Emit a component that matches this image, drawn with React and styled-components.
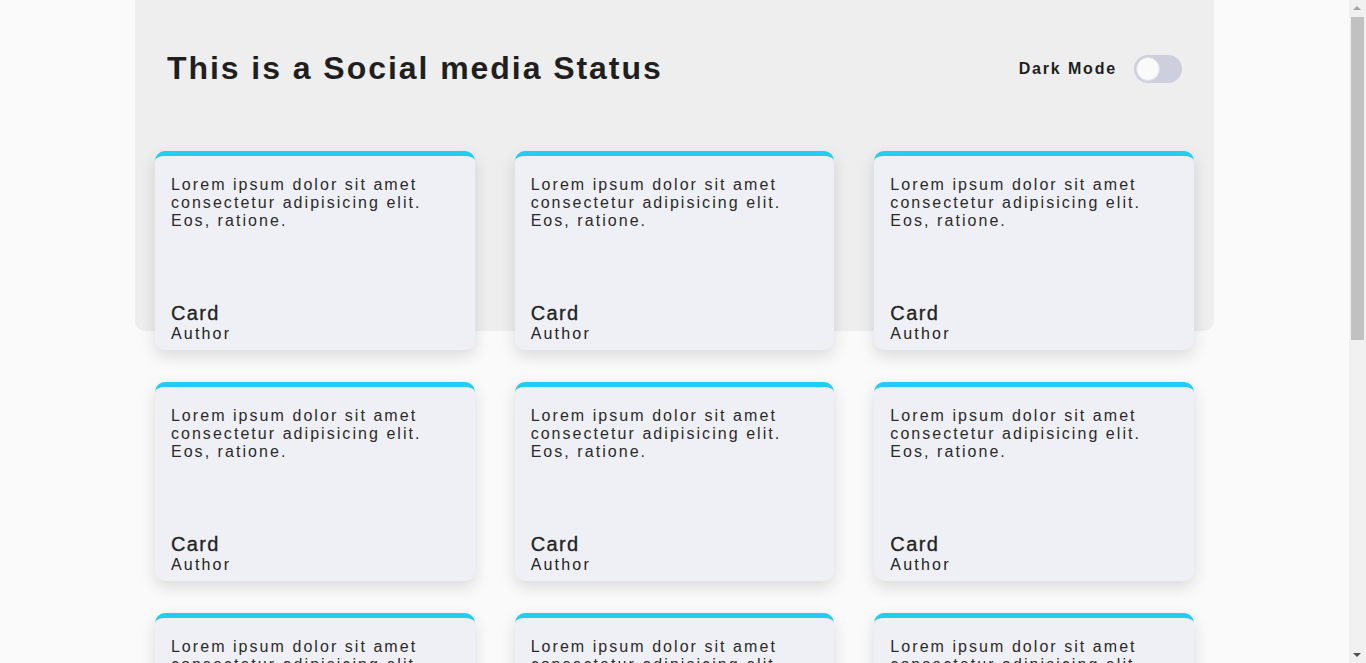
import * as React from 'react';
import styled, { createGlobalStyle } from 'styled-components';

const GlobalStyle = createGlobalStyle`
  html, body {
    margin: 0;
    padding: 0;
    background: #fafafa;
    font-family: 'Liberation Sans', Arial, sans-serif;
    color: #222;
  }
  body {
    padding-right: 17px;
  }
`;

const PageStyle = styled.main`
  position: relative;
  width: 80%;
  margin: 0 auto;
  padding: 0 20px 17px;
  box-sizing: border-box;

  /* grey panel that sits behind the title and the first row of cards */
  &::before {
    content: '';
    position: absolute;
    top: 0;
    left: 0;
    right: 0;
    height: 331px;
    background: #eeeeee;
    border-radius: 0 0 10px 10px;
    z-index: 0;
  }
`;

const HeaderStyle = styled.header`
  position: relative;
  display: flex;
  align-items: center;
  justify-content: space-between;
  height: 137px;
  padding: 0 12px;

  h1 {
    margin: 0;
    font-size: 32px;
    font-weight: 700;
    letter-spacing: 1.95px;
    color: #1f1f1f;
  }
`;

const ToggleRow = styled.label`
  display: flex;
  align-items: center;
  gap: 17px;
  font-size: 16px;
  font-weight: 700;
  letter-spacing: 1.85px;
  color: #1f1f1f;
  cursor: pointer;
`;

const Switch = styled.span`
  width: 48px;
  height: 28px;
  border-radius: 14px;
  background: #cdcfdc;
  display: flex;
  align-items: center;
  padding: 2px;
  box-sizing: border-box;
  justify-content: ${(p) => (p.$on ? 'flex-end' : 'flex-start')};

  span {
    width: 24px;
    height: 24px;
    box-sizing: border-box;
    border-radius: 50%;
    background: #fafafa;
    border: 1px solid #dcdde6;
  }
`;

const CardGrid = styled.div`
  position: relative;
  display: grid;
  grid-template-columns: repeat(3, 1fr);
  grid-auto-rows: 199px;
  column-gap: 40px;
  row-gap: 32px;
  padding-top: 14px;
`;

const CardStyle = styled.article`
  background: #eff0f5;
  border-top: 5px solid #22ccf2;
  border-radius: 10px;
  box-shadow: 0 6px 16px rgba(0, 0, 0, 0.13);
  box-sizing: border-box;
  padding: 20px 16px 6px;
  display: flex;
  flex-direction: column;
  justify-content: space-between;

  p {
    margin: 0;
    font-size: 16px;
    line-height: 18px;
    letter-spacing: 2.05px;
    color: #2a2a2a;
  }

  h3 {
    margin: 0;
    font-size: 20px;
    font-weight: 400;
    letter-spacing: 1.4px;
    line-height: 22px;
    color: #222;
    -webkit-text-stroke: 0.3px #222;
  }

  h5 {
    margin: 0;
    font-size: 16px;
    font-weight: 400;
    letter-spacing: 2.2px;
    line-height: 20px;
    color: #222;
  }
`;

// the browser's classic scrollbar, drawn over the right edge of the window
const ScrollTrack = styled.div`
  position: fixed;
  top: 0;
  right: 0;
  width: 17px;
  height: 100vh;
  background: #f1f1f1;
  z-index: 10;

  .thumb {
    position: absolute;
    top: 17px;
    left: 2px;
    width: 13px;
    height: 323px;
    background: #c1c1c1;
  }

  .up,
  .down {
    position: absolute;
    left: 4px;
    width: 0;
    height: 0;
    border-left: 4px solid transparent;
    border-right: 4px solid transparent;
  }

  .up {
    top: 6px;
    border-bottom: 4px solid #a3a3a3;
  }

  .down {
    bottom: 6px;
    border-top: 4px solid #505050;
  }
`;

const cards = Array.from({ length: 15 }, (_, i) => ({
  id: i,
  text: 'Lorem ipsum dolor sit amet consectetur adipisicing elit. Eos, ratione.',
  title: 'Card',
  author: 'Author',
}));

const App = () => {
  const [dark, setDark] = React.useState(false);

  return (
    <>
      <GlobalStyle />
      <PageStyle>
        <HeaderStyle>
          <h1>This is a Social media Status</h1>
          <ToggleRow onClick={() => setDark(!dark)}>
            Dark Mode
            <Switch $on={dark}>
              <span />
            </Switch>
          </ToggleRow>
        </HeaderStyle>
        <CardGrid>
          {cards.map((card) => (
            <CardStyle key={card.id}>
              <p>{card.text}</p>
              <div>
                <h3>{card.title}</h3>
                <h5>{card.author}</h5>
              </div>
            </CardStyle>
          ))}
        </CardGrid>
      </PageStyle>
      <ScrollTrack aria-hidden="true">
        <span className="up" />
        <span className="thumb" />
        <span className="down" />
      </ScrollTrack>
    </>
  );
};

export default App;
